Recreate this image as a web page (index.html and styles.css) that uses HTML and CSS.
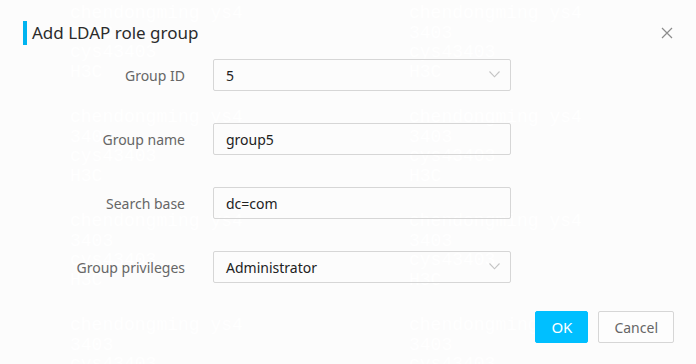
FILE: index.html
```html
<!DOCTYPE html>
<html lang="en">
<head>
<meta charset="utf-8">
<title>Add LDAP role group</title>
<link rel="stylesheet" href="styles.css">
</head>
<body>
<div class="dialog">
  <div class="watermark" aria-hidden="true">
    <div class="wm-col">
      <div class="wm-block"><div>chendongming ys4</div><div>3403</div><div>cys43403</div><div>H3C</div></div>
      <div class="wm-block"><div>chendongming ys4</div><div>3403</div><div>cys43403</div><div>H3C</div></div>
      <div class="wm-block"><div>chendongming ys4</div><div>3403</div><div>cys43403</div><div>H3C</div></div>
      <div class="wm-block"><div>chendongming ys4</div><div>3403</div><div>cys43403</div><div>H3C</div></div>
    </div>
    <div class="wm-col">
      <div class="wm-block"><div>chendongming ys4</div><div>3403</div><div>cys43403</div><div>H3C</div></div>
      <div class="wm-block"><div>chendongming ys4</div><div>3403</div><div>cys43403</div><div>H3C</div></div>
      <div class="wm-block"><div>chendongming ys4</div><div>3403</div><div>cys43403</div><div>H3C</div></div>
      <div class="wm-block"><div>chendongming ys4</div><div>3403</div><div>cys43403</div><div>H3C</div></div>
    </div>
  </div>
  <div class="header">
    <span class="bar"></span>
    <h1 class="title">Add LDAP role group</h1>
    <button class="close" aria-label="Close">
      <svg width="12" height="12" viewBox="0 0 12 12"><path d="M1 1L11 11M11 1L1 11" stroke="#8c8c8c" stroke-width="1.2" fill="none"/></svg>
    </button>
  </div>
  <div class="form">
    <div class="row">
      <label class="label">Group ID</label>
      <div class="field select"><span class="value">5</span>
        <svg class="arrow" width="11" height="7" viewBox="0 0 11 7"><path d="M0.5 0.5L5.5 5.8L10.5 0.5" stroke="#c4c4c4" stroke-width="1.1" fill="none"/></svg>
      </div>
    </div>
    <div class="row">
      <label class="label">Group name</label>
      <div class="field"><span class="value">group5</span></div>
    </div>
    <div class="row">
      <label class="label">Search base</label>
      <div class="field"><span class="value">dc=com</span></div>
    </div>
    <div class="row">
      <label class="label">Group privileges</label>
      <div class="field select"><span class="value">Administrator</span>
        <svg class="arrow" width="11" height="7" viewBox="0 0 11 7"><path d="M0.5 0.5L5.5 5.8L10.5 0.5" stroke="#c4c4c4" stroke-width="1.1" fill="none"/></svg>
      </div>
    </div>
  </div>
  <div class="footer">
    <button class="btn primary">OK</button>
    <button class="btn">Cancel</button>
  </div>
</div>
</body>
</html>
```
FILE: styles.css
```css
* { box-sizing: border-box; }
html, body { margin: 0; padding: 0; }
body {
  background: #fcfcfc;
  font-family: "Noto Sans", "Open Sans", sans-serif;
  color: #333;
}
.dialog {
  position: relative;
  width: 696px;
  height: 364px;
  overflow: hidden;
  background: #fcfcfc;
}
.header, .form, .footer {
  position: relative;
  z-index: 1;
}
.header {
  display: flex;
  align-items: center;
  padding: 21px 23px 0 23px;
  height: 45px;
}
.bar {
  width: 4px;
  height: 24px;
  background: #00b4f0;
  flex: none;
}
.title {
  margin: 0 0 0 5px;
  font-size: 17px;
  font-weight: 400;
  line-height: 24px;
  color: #2b2b2b;
  flex: 1;
}
.close {
  border: 0;
  background: none;
  padding: 0;
  width: 12px;
  height: 12px;
  display: flex;
}
.form {
  display: flex;
  flex-direction: column;
  gap: 32px;
  padding-top: 14px;
}
.row {
  display: flex;
  align-items: center;
  gap: 28px;
  height: 32px;
}
.label {
  width: 185px;
  text-align: right;
  font-size: 14px;
  color: #666;
}
.field {
  width: 298px;
  height: 32px;
  border: 1px solid #d6d6d6;
  border-radius: 2px;
  display: flex;
  align-items: center;
  justify-content: space-between;
  padding: 0 10px 0 12px;
  font-size: 14px;
  color: #222;
}
.arrow { margin-bottom: 1px; }
.footer {
  display: flex;
  justify-content: flex-end;
  gap: 10px;
  padding: 28px 22px 0 0;
}
.btn {
  height: 32px;
  min-width: 53px;
  padding: 0 15px;
  border: 1px solid #d6d6d6;
  border-radius: 2px;
  background: #fdfdfd;
  color: #666;
  font-family: inherit;
  font-size: 14px;
}
.btn.primary {
  background: #00bfff;
  border-color: #00bfff;
  color: #fff;
  width: 53px;
  padding: 0;
  font-size: 15px;
}
.watermark {
  position: absolute;
  inset: 0;
  z-index: 0;
  pointer-events: none;
  display: flex;
  padding: 4px 0 0 70px;
  font-family: "Liberation Mono", monospace;
  font-size: 18px;
  line-height: 19.7px;
  color: #ffffff;
  white-space: nowrap;
}
.wm-col { width: 339px; flex: none; }
.wm-block { height: 104px; }
```
